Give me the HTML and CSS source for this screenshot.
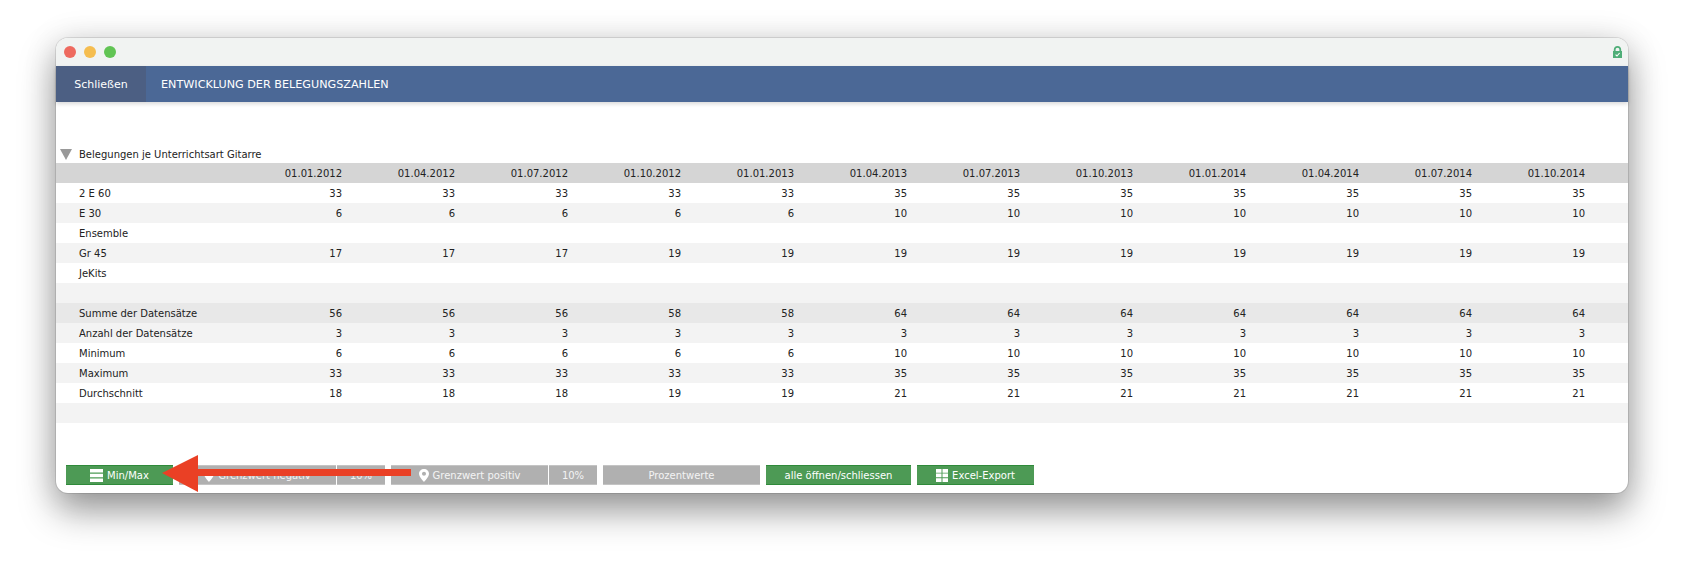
FILE: index.html
```html
<!DOCTYPE html>
<html lang="de">
<head>
    <meta charset="UTF-8">
    <meta name="viewport" content="width=device-width, initial-scale=1.0">
    <title>Entwicklung der Belegungszahlen</title>
    <link rel="stylesheet" href="styles.css">
</head>
<body>
    <div class="window">
        <!-- Titelleiste -->
        <div class="titlebar">
            <div class="lights">
                <span class="light red"></span>
                <span class="light yellow"></span>
                <span class="light green"></span>
            </div>
            <svg class="lock" width="9" height="12" viewBox="0 0 9 12">
                <path d="M0 12V5H.8V3.8C.8 1.5 2.3 0 4.5 0S8.2 1.5 8.2 3.8V5H9V12Z M2.6 5H6.4V3.8C6.4 2.5 5.7 1.7 4.5 1.7S2.6 2.5 2.6 3.8Z" fill="#4fae78" fill-rule="evenodd"/>
                <path d="M2.6 8.6L4 10L6.6 7" fill="none" stroke="#fff" stroke-width="1.1"/>
            </svg>
        </div>

        <!-- Navigation -->
        <div class="navbar">
            <a class="close-link">Schließen</a>
            <span class="nav-title">ENTWICKLUNG DER BELEGUNGSZAHLEN</span>
        </div>

        <div class="content">
            <div class="section-title">
                <span class="triangle"></span>
                Belegungen je Unterrichtsart Gitarre
            </div>

            <table class="data-table">
                <thead>
                    <tr>
                        <th></th>
                        <th>01.01.2012</th><th>01.04.2012</th><th>01.07.2012</th><th>01.10.2012</th>
                        <th>01.01.2013</th><th>01.04.2013</th><th>01.07.2013</th><th>01.10.2013</th>
                        <th>01.01.2014</th><th>01.04.2014</th><th>01.07.2014</th><th>01.10.2014</th>
                        <th></th>
                    </tr>
                </thead>
                <tbody>
                    <tr>
                        <td>2 E 60</td>
                        <td>33</td><td>33</td><td>33</td><td>33</td><td>33</td><td>35</td>
                        <td>35</td><td>35</td><td>35</td><td>35</td><td>35</td><td>35</td>
                        <td></td>
                    </tr>
                    <tr class="alt">
                        <td>E 30</td>
                        <td>6</td><td>6</td><td>6</td><td>6</td><td>6</td><td>10</td>
                        <td>10</td><td>10</td><td>10</td><td>10</td><td>10</td><td>10</td>
                        <td></td>
                    </tr>
                    <tr>
                        <td>Ensemble</td>
                        <td></td><td></td><td></td><td></td><td></td><td></td>
                        <td></td><td></td><td></td><td></td><td></td><td></td>
                        <td></td>
                    </tr>
                    <tr class="alt">
                        <td>Gr 45</td>
                        <td>17</td><td>17</td><td>17</td><td>19</td><td>19</td><td>19</td>
                        <td>19</td><td>19</td><td>19</td><td>19</td><td>19</td><td>19</td>
                        <td></td>
                    </tr>
                    <tr>
                        <td>JeKits</td>
                        <td></td><td></td><td></td><td></td><td></td><td></td>
                        <td></td><td></td><td></td><td></td><td></td><td></td>
                        <td></td>
                    </tr>
                    <tr class="alt">
                        <td colspan="14"></td>
                    </tr>
                    <tr class="sum">
                        <td>Summe der Datensätze</td>
                        <td>56</td><td>56</td><td>56</td><td>58</td><td>58</td><td>64</td>
                        <td>64</td><td>64</td><td>64</td><td>64</td><td>64</td><td>64</td>
                        <td></td>
                    </tr>
                    <tr class="alt">
                        <td>Anzahl der Datensätze</td>
                        <td>3</td><td>3</td><td>3</td><td>3</td><td>3</td><td>3</td>
                        <td>3</td><td>3</td><td>3</td><td>3</td><td>3</td><td>3</td>
                        <td></td>
                    </tr>
                    <tr>
                        <td>Minimum</td>
                        <td>6</td><td>6</td><td>6</td><td>6</td><td>6</td><td>10</td>
                        <td>10</td><td>10</td><td>10</td><td>10</td><td>10</td><td>10</td>
                        <td></td>
                    </tr>
                    <tr class="alt">
                        <td>Maximum</td>
                        <td>33</td><td>33</td><td>33</td><td>33</td><td>33</td><td>35</td>
                        <td>35</td><td>35</td><td>35</td><td>35</td><td>35</td><td>35</td>
                        <td></td>
                    </tr>
                    <tr>
                        <td>Durchschnitt</td>
                        <td>18</td><td>18</td><td>18</td><td>19</td><td>19</td><td>21</td>
                        <td>21</td><td>21</td><td>21</td><td>21</td><td>21</td><td>21</td>
                        <td></td>
                    </tr>
                    <tr class="alt">
                        <td colspan="14"></td>
                    </tr>
                </tbody>
            </table>

            <!-- Buttons -->
            <div class="toolbar">
                <a class="btn btn-green btn-minmax">
                    <svg class="icon" width="13" height="13" viewBox="0 0 13 13"><path d="M0 0H13V3.4H0Z M0 4.8H13V8.2H0Z M0 9.6H13V13H0Z" fill="#fff"/></svg>
                    Min/Max
                </a>
                <div class="btn-group">
                    <a class="btn btn-gray btn-limit">
                        <svg class="icon" width="10" height="13" viewBox="0 0 10 13"><path d="M5 0C2.2 0 0 2.1 0 4.8C0 8 5 13 5 13S10 8 10 4.8C10 2.1 7.8 0 5 0ZM5 6.8C3.9 6.8 3 5.9 3 4.8S3.9 2.8 5 2.8S7 3.7 7 4.8S6.1 6.8 5 6.8Z" fill="#fff" fill-rule="evenodd"/></svg>
                        Grenzwert negativ
                    </a>
                    <a class="btn btn-gray btn-value">10%</a>
                </div>
                <div class="btn-group">
                    <a class="btn btn-gray btn-limit">
                        <svg class="icon" width="10" height="13" viewBox="0 0 10 13"><path d="M5 0C2.2 0 0 2.1 0 4.8C0 8 5 13 5 13S10 8 10 4.8C10 2.1 7.8 0 5 0ZM5 6.8C3.9 6.8 3 5.9 3 4.8S3.9 2.8 5 2.8S7 3.7 7 4.8S6.1 6.8 5 6.8Z" fill="#fff" fill-rule="evenodd"/></svg>
                        Grenzwert positiv
                    </a>
                    <a class="btn btn-gray btn-value">10%</a>
                </div>
                <a class="btn btn-gray btn-percent">Prozentwerte</a>
                <a class="btn btn-green btn-toggle">alle öffnen/schliessen</a>
                <a class="btn btn-green btn-excel">
                    <svg class="icon" width="12" height="13" viewBox="0 0 12 13"><path d="M0 0H5.5V3.7H0Z M6.5 0H12V3.7H6.5Z M0 4.6H5.5V8.3H0Z M6.5 4.6H12V8.3H6.5Z M0 9.2H5.5V13H0Z M6.5 9.2H12V13H6.5Z" fill="#fff"/></svg>
                    Excel-Export
                </a>
            </div>
        </div>

        <!-- Pfeil (Anmerkung im Screenshot) -->
        <svg class="arrow" width="250" height="40" viewBox="0 0 250 40">
            <path d="M1 19L37 1V15H250V22H37V38Z" fill="#ea4025"/>
        </svg>
    </div>
</body>
</html>
```

FILE: styles.css
```css
* {
    box-sizing: border-box;
}

body {
    margin: 0;
    height: 567px;
    padding: 38px 56px 0;
    background-color: #fff;
    font-family: 'DejaVu Sans', Verdana, sans-serif;
    font-size: 10px;
    color: #222;
}

.window {
    position: relative;
    height: 455px;
    border-radius: 12px;
    background-color: #fff;
    box-shadow: 0 0 0 1px rgba(0,0,0,0.1), 0 18px 36px rgba(0,0,0,0.38), 0 2px 34px rgba(0,0,0,0.12);
}

.titlebar {
    display: flex;
    justify-content: space-between;
    align-items: center;
    height: 28px;
    padding: 0 6px 0 8px;
    background-color: #f1f3f2;
    border-radius: 12px 12px 0 0;
}

.lights {
    display: flex;
    gap: 8px;
}

.light {
    width: 12px;
    height: 12px;
    border-radius: 50%;
}

.red {
    background-color: #ee6a5f;
}

.yellow {
    background-color: #f5bd4f;
}

.green {
    background-color: #61c454;
}

.navbar {
    display: flex;
    align-items: center;
    height: 36px;
    background-color: #4b6896;
    color: #fff;
    font-size: 11px;
    box-shadow: 0 2px 4px rgba(0,0,0,0.15);
}

.close-link {
    display: flex;
    align-items: center;
    justify-content: center;
    width: 90px;
    height: 100%;
    background-color: #4c5f83;
}

.nav-title {
    margin-left: 15px;
    font-size: 11.2px;
}

.content {
    padding-top: 43px;
}

.section-title {
    display: flex;
    align-items: center;
    gap: 7px;
    height: 18px;
    padding-left: 4px;
}

.triangle {
    width: 0;
    height: 0;
    border-left: 6px solid transparent;
    border-right: 6px solid transparent;
    border-top: 11px solid #999;
}

.data-table {
    width: 100%;
    table-layout: fixed;
    border-collapse: collapse;
}

.data-table th,
.data-table td {
    height: 20px;
    padding: 0;
    font-weight: normal;
    text-align: right;
    white-space: nowrap;
}

.data-table th:first-child,
.data-table td:first-child {
    width: 173px;
    padding-left: 23px;
    text-align: left;
}

.data-table th:last-child,
.data-table td:last-child {
    width: 43px;
}

.data-table th {
    background-color: #d5d5d5;
}

.alt {
    background-color: #f3f3f3;
}

.sum {
    background-color: #e8e8e8;
}

.toolbar {
    display: flex;
    gap: 6px;
    margin-top: 42px;
    padding-left: 10px;
}

.btn-group {
    display: flex;
    gap: 1px;
}

.btn {
    display: flex;
    align-items: center;
    justify-content: center;
    gap: 4px;
    height: 20px;
    color: #fff;
}

.btn-green {
    background-color: #4d9a55;
    border-top: 1px solid #2f8a3a;
    border-bottom: 1px solid #2f8a3a;
}

.btn-gray {
    background-color: #b0b0b0;
    color: #f4f4f4;
    border-top: 1px solid #c4c4c4;
    border-bottom: 1px solid #c4c4c4;
}

.btn-minmax {
    width: 107px;
}

.btn-limit {
    width: 157px;
}

.btn-value {
    width: 48px;
}

.btn-percent {
    width: 157px;
}

.btn-toggle {
    width: 145px;
}

.btn-excel {
    width: 117px;
}

.arrow {
    position: absolute;
    left: 105px;
    top: 416px;
}
```
